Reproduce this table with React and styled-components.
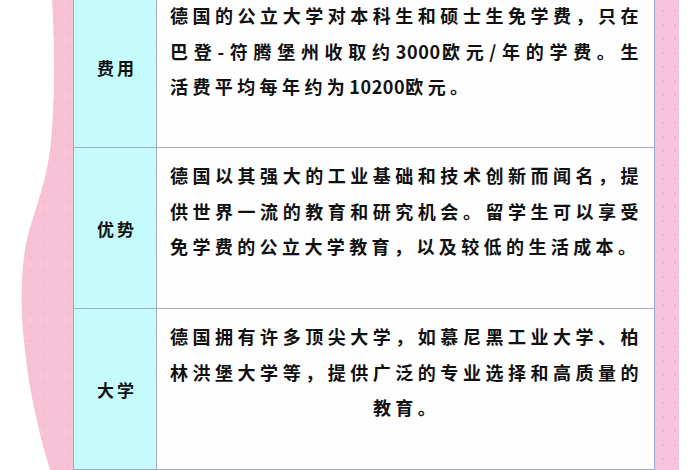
import React from "react";
import styled, { createGlobalStyle } from "styled-components";

const Global = createGlobalStyle`
  html, body { margin: 0; padding: 0; background: #ffffff; }
  body { overflow: hidden; font-family: "Noto Sans CJK SC", "Noto Sans", sans-serif; }
`;

const Page = styled.div`
  width: 700px;
  height: 470px;
  display: flex;
  align-items: flex-start;
  background: #ffffff;
  overflow: hidden;
`;

const LeftDeco = styled.div`
  width: 73px;
  height: 470px;
  flex: none;
  svg { display: block; }
`;

const Table = styled.div`
  width: 580px;
  flex: none;
  margin-top: -12px;
  border-left: 1px solid #9aa6d6;
  border-right: 1px solid #9aa6d6;
  display: flex;
  flex-direction: column;
`;

const Row = styled.div`
  display: grid;
  grid-template-columns: 83px 1fr;
  height: ${(p) => p.$h}px;
  border-bottom: 1px solid #a3abc9;
  box-sizing: border-box;
`;

const Label = styled.div`
  background: #c6fbfe;
  border-right: 1px solid #9aa6d6;
  display: flex;
  align-items: center;
  justify-content: center;
  font-weight: 700;
  font-size: 17px;
  letter-spacing: 3px;
  padding-left: 4px;
  color: #111;
`;

const Content = styled.div`
  background: #fefeff;
  padding: 10px 11px 0 13px;
  color: #111;
  font-weight: 700;
  font-size: 18px;
  line-height: 35.5px;
  letter-spacing: 4.4px;
`;

const Line = styled.div`
  white-space: nowrap;
  text-align: ${(p) => (p.$fill ? "justify" : p.$align || "left")};
  text-align-last: ${(p) => (p.$fill ? "justify" : p.$align || "left")};
`;

const Num = styled.span`
  letter-spacing: 0.6px;
`;

const RightStrip = styled.div`
  width: 24px;
  height: 470px;
  flex: none;
  background-color: #f6c2dc;
  background-image: radial-gradient(circle, #eeb3cf 0.7px, transparent 1.2px);
  background-size: 12px 14px;
  background-position: 2px 4px;
`;

const rows = [
  {
    label: "费用",
    h: 160,
    lines: [
      { t: "德国的公立大学对本科生和硕士生免学费，只在", fill: true },
      { t: "巴登-符腾堡州收取约3000欧元/年的学费。生", fill: true },
      { t: "活费平均每年约为10200欧元。" },
    ],
  },
  {
    label: "优势",
    h: 161,
    lines: [
      { t: "德国以其强大的工业基础和技术创新而闻名，提", fill: true },
      { t: "供世界一流的教育和研究机会。留学生可以享受", fill: true },
      { t: "免学费的公立大学教育，以及较低的生活成本。" },
    ],
  },
  {
    label: "大学",
    h: 161,
    lines: [
      { t: "德国拥有许多顶尖大学，如慕尼黑工业大学、柏", fill: true },
      { t: "林洪堡大学等，提供广泛的专业选择和高质量的", fill: true },
      { t: "教育。", align: "center" },
    ],
  },
];

function renderText(t) {
  const parts = t.split(/(\d+)/);
  return parts.map((p, i) =>
    /^\d+$/.test(p) ? <Num key={i}>{p}</Num> : <React.Fragment key={i}>{p}</React.Fragment>
  );
}

const WAVE =
  "M52,0 C55,50 55,110 50,150 C45,190 30,220 25,250 C20,280 21,320 25,350 C29,390 38,430 50,470 L73,470 L73,0 Z";

function Wave() {
  return (
    <svg width="73" height="470" viewBox="0 0 73 470">
      <defs>
        <pattern id="dots" width="13" height="14" patternUnits="userSpaceOnUse">
          <circle cx="4" cy="5" r="0.9" fill="#eeb0c8" />
        </pattern>
      </defs>
      <path d={WAVE} fill="#f8c2d6" />
      <path d={WAVE} fill="url(#dots)" />
    </svg>
  );
}

export default function App() {
  return (
    <>
      <Global />
      <Page>
        <LeftDeco>
          <Wave />
        </LeftDeco>
        <Table>
          {rows.map((r) => (
            <Row key={r.label} $h={r.h}>
              <Label>{r.label}</Label>
              <Content>
                {r.lines.map((l, i) => (
                  <Line key={i} $fill={l.fill} $align={l.align}>
                    {renderText(l.t)}
                  </Line>
                ))}
              </Content>
            </Row>
          ))}
        </Table>
        <RightStrip />
      </Page>
    </>
  );
}
